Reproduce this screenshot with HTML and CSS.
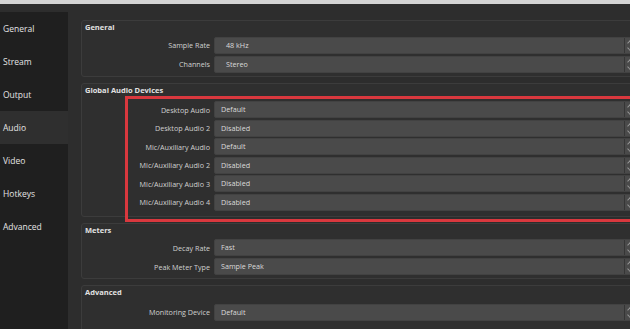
FILE: index.html
```html
<!DOCTYPE html>
<html lang="en">
<head>
    <meta charset="UTF-8">
    <title>Settings - Audio</title>
    <link rel="stylesheet" href="styles.css">
</head>
<body>
    <div class="topbar"></div>
    <div class="window">
        <nav class="sidebar">
            <div class="nav-item">General</div>
            <div class="nav-item">Stream</div>
            <div class="nav-item">Output</div>
            <div class="nav-item active">Audio</div>
            <div class="nav-item">Video</div>
            <div class="nav-item">Hotkeys</div>
            <div class="nav-item">Advanced</div>
        </nav>

        <main class="main">
            <section class="group">
                <div class="group-title">General</div>
                <div class="rows">
                    <div class="row">
                        <span class="label">Sample Rate</span>
                        <div class="combo combo-wide"><span class="value">48 kHz</span><span class="arrows"></span></div>
                    </div>
                    <div class="row">
                        <span class="label">Channels</span>
                        <div class="combo combo-wide"><span class="value">Stereo</span><span class="arrows"></span></div>
                    </div>
                </div>
            </section>

            <section class="group devices">
                <div class="group-title">Global Audio Devices</div>
                <div class="rows rows-tight">
                    <div class="row">
                        <span class="label">Desktop Audio</span>
                        <div class="combo"><span class="value">Default</span><span class="arrows"></span></div>
                    </div>
                    <div class="row">
                        <span class="label">Desktop Audio 2</span>
                        <div class="combo"><span class="value">Disabled</span><span class="arrows"></span></div>
                    </div>
                    <div class="row">
                        <span class="label">Mic/Auxiliary Audio</span>
                        <div class="combo"><span class="value">Default</span><span class="arrows"></span></div>
                    </div>
                    <div class="row">
                        <span class="label">Mic/Auxiliary Audio 2</span>
                        <div class="combo"><span class="value">Disabled</span><span class="arrows"></span></div>
                    </div>
                    <div class="row">
                        <span class="label">Mic/Auxiliary Audio 3</span>
                        <div class="combo"><span class="value">Disabled</span><span class="arrows"></span></div>
                    </div>
                    <div class="row">
                        <span class="label">Mic/Auxiliary Audio 4</span>
                        <div class="combo"><span class="value">Disabled</span><span class="arrows"></span></div>
                    </div>
                </div>
                <div class="highlight"></div>
            </section>

            <section class="group">
                <div class="group-title">Meters</div>
                <div class="rows">
                    <div class="row">
                        <span class="label">Decay Rate</span>
                        <div class="combo"><span class="value">Fast</span><span class="arrows"></span></div>
                    </div>
                    <div class="row">
                        <span class="label">Peak Meter Type</span>
                        <div class="combo"><span class="value">Sample Peak</span><span class="arrows"></span></div>
                    </div>
                </div>
            </section>

            <section class="group">
                <div class="group-title">Advanced</div>
                <div class="rows rows-tight">
                    <div class="row">
                        <span class="label">Monitoring Device</span>
                        <div class="combo"><span class="value">Default</span><span class="arrows"></span></div>
                    </div>
                    <div class="row">
                        <span class="label"></span>
                        <label class="check">
                            <span class="box">
                                <svg width="8" height="8" viewBox="0 0 8 8"><path d="M1 4.2 L3.1 6.3 L7 1.6" fill="none" stroke="#e8e8e8" stroke-width="1.4"/></svg>
                            </span>
                            Disable Windows audio ducking
                        </label>
                    </div>
                </div>
            </section>
        </main>
    </div>
</body>
</html>
```

FILE: styles.css
```css
* {
    box-sizing: border-box;
    font-family: 'Open Sans', 'Noto Sans', sans-serif;
}
body {
    margin: 0;
    width: 630px;
    height: 329px;
    overflow: hidden;
    background-color: #2d2d2d;
    color: #d6d6d6;
}
.topbar {
    height: 4px;
    background-color: #d4d4d4;
}
.window {
    display: flex;
    height: 325px;
}

/* barra lateral */
.sidebar {
    width: 68px;
    flex-shrink: 0;
    margin-top: 8px;
    background-color: #1f1f1f;
}
.nav-item {
    height: 33px;
    line-height: 33px;
    padding-left: 3px;
    font-size: 8.5px;
    color: #e4e4e4;
}
.nav-item.active {
    background-color: #2f2f2f;
}

/* grupos */
.main {
    display: flex;
    flex-direction: column;
    gap: 6px;
    padding: 16px 0 0 13px;
    width: 580px;
    flex-shrink: 0;
}
.group {
    position: relative;
    width: 566px;
    border: 1px solid #3c3c3c;
    border-radius: 3px;
    background-color: #2f2f2f;
    padding: 0 3px 3px 3px;
}
.group-title {
    height: 12px;
    line-height: 12px;
    font-size: 7.5px;
    font-weight: 700;
    color: #e2e2e2;
}
.rows {
    display: flex;
    flex-direction: column;
    gap: 2px;
    padding-top: 3.5px;
}
.rows-tight {
    padding-top: 5.5px;
    gap: 1.6px;
}
.devices {
    padding-bottom: 5px;
}
.row {
    display: grid;
    grid-template-columns: 125px 1fr;
    gap: 4px;
    align-items: center;
    height: 17px;
}
.label {
    text-align: right;
    font-size: 7.2px;
    color: #cfcfcf;
}
.combo {
    display: flex;
    height: 17px;
    background-color: #4a4a4a;
    border: 1px solid #424242;
    border-radius: 2px;
}
.value {
    flex: 1;
    line-height: 15px;
    padding-left: 6px;
    font-size: 7.2px;
    color: #dadada;
}
.combo-wide .value {
    padding-left: 11px;
}
.arrows {
    position: relative;
    width: 18px;
    border-left: 1px solid #353535;
}
.arrows::before,
.arrows::after {
    content: '';
    position: absolute;
    left: 3px;
    width: 3px;
    height: 3px;
    border-left: 1px solid #9a9a9a;
    border-top: 1px solid #9a9a9a;
}
.arrows::before {
    top: 3px;
    transform: rotate(45deg);
}
.arrows::after {
    top: 8px;
    transform: rotate(-135deg);
}

/* recuadro rojo */
.highlight {
    position: absolute;
    left: 43px;
    top: 12px;
    width: 540px;
    height: 126px;
    border: 3px solid #d9383e;
    pointer-events: none;
}

.check {
    display: flex;
    align-items: center;
    gap: 4px;
    font-size: 7.2px;
    color: #dadada;
    padding-top: 6px;
}
.box {
    display: flex;
    align-items: center;
    justify-content: center;
    width: 9px;
    height: 9px;
    background-color: #4a4a4a;
    border: 1px solid #5a5a5a;
}
```
